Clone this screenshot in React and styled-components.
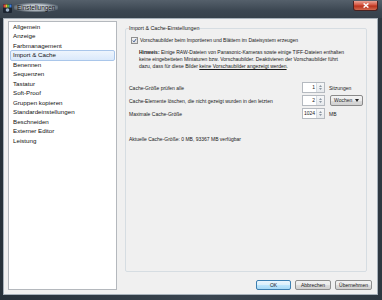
import styled, { createGlobalStyle } from 'styled-components'

const Global = createGlobalStyle`
    html, body { margin: 0; padding: 0; background: #2b353e; }
    body { font-family: 'Liberation Sans', Arial, sans-serif; }
`

const categories = [
    'Allgemein', 'Anzeige', 'Farbmanagement', 'Import & Cache', 'Benennen',
    'Sequenzen', 'Tastatur', 'Soft-Proof', 'Gruppen kopieren',
    'Standardeinstellungen', 'Beschneiden', 'Externer Editor', 'Leistung',
]

const Frame = styled.div`
    width: 382px;
    height: 300px;
    display: flex;
    flex-direction: column;
    background: linear-gradient(90deg, #27313a 0%, #3a4550 55%, #2e3841 100%);
    overflow: hidden;
`

const TitleBar = styled.div`
    height: 18px;
    display: flex;
    align-items: flex-start;
    padding: 0 4px 0 3px;
    background: linear-gradient(180deg, #55606b 0%, #3b4651 60%, #36414b 100%);
`

const AppIcon = styled.svg`
    margin-top: 4px;
    flex: none;
`

const Caption = styled.span`
    margin: 3px 0 0 2px;
    padding: 0 3px;
    font-size: 6.4px;
    line-height: 9px;
    color: #111;
    border-radius: 4px;
    background: radial-gradient(ellipse at center, rgba(214,222,229,0.85) 40%, rgba(214,222,229,0) 80%);
`

const CloseButton = styled.div`
    margin-left: auto;
    width: 23px;
    height: 9px;
    margin-top: 1px;
    border: 1px solid #4a2220;
    border-top: none;
    border-radius: 0 0 3px 3px;
    background: linear-gradient(180deg, #e8a497 0%, #d5533e 45%, #b8321d 55%, #d2694f 100%);
    display: flex;
    align-items: center;
    justify-content: center;
`

const Client = styled.div`
    flex: 1;
    margin: 0 4px 5px 3px;
    background: #f0f0f0;
    border: 1px solid #a7b1ba;
    display: flex;
    padding: 2px 5px 4px 4px;
    gap: 8px;
`

const Sidebar = styled.ul`
    width: 110px;
    margin: 0;
    padding: 0.5px 1px;
    list-style: none;
    background: #fff;
    border: 1px solid #b4b8bd;
`

const Item = styled.li`
    height: 8.5px;
    line-height: 8.5px;
    font-size: 6.2px;
    color: #111;
    padding-left: 2px;
    border: 1px solid ${p => (p.$active ? '#a9c6ea' : 'transparent')};
    border-radius: 2px;
    margin: -1px 0;
    background: ${p => (p.$active ? 'linear-gradient(180deg, #eef5fd 0%, #dae9fb 100%)' : 'transparent')};
    white-space: nowrap;
`

const Main = styled.div`
    flex: 1;
    display: flex;
    flex-direction: column;
`

const Group = styled.fieldset`
    flex: 1;
    margin: 4px 5px 0 0;
    padding: 0 3px;
    border: 1px solid #d6dde2;
    border-radius: 2px;
    font-size: 5px;
    color: #1a1a1a;
`

const Legend = styled.legend`
    padding: 0;
    font-size: 5.3px;
    line-height: 6px;
    color: #1a1a1a;
`

const CheckRow = styled.label`
    display: flex;
    align-items: center;
    gap: 2px;
    margin: 6px 0 0 2px;
    line-height: 7px;
    white-space: nowrap;
`

const CheckBox = styled.span`
    width: 5px;
    height: 5px;
    border: 1px solid #8f8f8f;
    background: linear-gradient(180deg, #f4f4f4, #dedede);
    display: flex;
    align-items: center;
    justify-content: center;
`

const Note = styled.div`
    margin: 5px 0 0 10px;
    line-height: 7px;
    white-space: nowrap;
`

const Line = styled.div``

const Strong = styled.b`
    font-weight: bold;
`

const Link = styled.span`
    text-decoration: underline;
`

const Settings = styled.div`
    display: grid;
    grid-template-columns: 169px 23px auto;
    column-gap: 4px;
    row-gap: 2px;
    align-items: center;
    margin-top: 12px;
`

const Label = styled.span`
    white-space: nowrap;
`

const SpinBox = styled.div`
    height: 11px;
    box-sizing: border-box;
    border: 1px solid #b5bac0;
    background: #fff;
    display: flex;
`

const SpinValue = styled.span`
    flex: 1;
    text-align: right;
    line-height: 9px;
    padding-right: 1px;
`

const SpinArrows = styled.span`
    width: 7px;
    display: flex;
    flex-direction: column;
    border-left: 1px solid #d6dbe0;
    background: linear-gradient(180deg, #f7f8f9, #e6e9ec);
    align-items: center;
    justify-content: space-evenly;
`

const Combo = styled.div`
    width: 33px;
    height: 11px;
    box-sizing: border-box;
    border: 1px solid #8a8a8a;
    border-radius: 2px;
    background: linear-gradient(180deg, #f3f3f3 0%, #ebebeb 50%, #dcdcdc 51%, #d0d0d0 100%);
    display: flex;
    align-items: center;
    justify-content: space-between;
    padding: 0 3px;
    margin-left: 1px;
    line-height: 9px;
`

const Current = styled.div`
    margin-top: 17px;
    white-space: nowrap;
`

const Buttons = styled.div`
    display: flex;
    justify-content: flex-end;
    gap: 4px;
    margin-top: 8px;
`

const Button = styled.button`
    width: ${p => p.$w}px;
    height: 10px;
    padding: 0;
    box-sizing: border-box;
    font-family: inherit;
    font-size: 5px;
    color: #1a1a1a;
    border: 1px solid ${p => (p.$default ? '#3c7fb1' : '#8e8f8f')};
    border-radius: 2px;
    background: ${p => (p.$default
        ? 'linear-gradient(180deg, #eaf6fd 0%, #d9f0fc 50%, #bee6fd 51%, #a7d9f5 100%)'
        : 'linear-gradient(180deg, #f2f2f2 0%, #ebebeb 50%, #dddddd 51%, #cfcfcf 100%)')};
`

const Arrow = ({ up }) => (
    <svg width="3" height="2" viewBox="0 0 4 2">
        <path d={up ? 'M0 2 L2 0 L4 2 Z' : 'M0 0 L4 0 L2 2 Z'} fill="#6b7a8a" />
    </svg>
)

const Spin = ({ value }) => (
    <SpinBox>
        <SpinValue>{value}</SpinValue>
        <SpinArrows>
            <Arrow up />
            <Arrow />
        </SpinArrows>
    </SpinBox>
)

const App = () => {
    return <>
        <Global />
        <Frame>
            <TitleBar>
                <AppIcon width="9" height="9" viewBox="0 0 9 9">
                    <rect x="0" y="0" width="9" height="9" rx="1" fill="#1b2430" />
                    <rect x="0.5" y="0.5" width="2" height="3" fill="#e94040" />
                    <rect x="2.5" y="0.5" width="2" height="3" fill="#f4c430" />
                    <rect x="4.5" y="0.5" width="2" height="3" fill="#4bb34b" />
                    <rect x="6.5" y="0.5" width="2" height="3" fill="#3f7fe0" />
                    <circle cx="4.5" cy="6" r="1.8" fill="#9fb3c8" />
                </AppIcon>
                <Caption>Einstellungen</Caption>
                <CloseButton>
                    <svg width="6" height="5" viewBox="0 0 6 5">
                        <path d="M0.6 0.4 L5.4 4.6 M5.4 0.4 L0.6 4.6" stroke="#fff" strokeWidth="1.4" />
                    </svg>
                </CloseButton>
            </TitleBar>
            <Client>
                <Sidebar>
                    {categories.map(c => <Item key={c} $active={c === 'Import & Cache'}>{c}</Item>)}
                </Sidebar>
                <Main>
                    <Group>
                        <Legend>Import &amp; Cache-Einstellungen</Legend>
                        <CheckRow>
                            <CheckBox>
                                <svg width="5" height="5" viewBox="0 0 5 5">
                                    <path d="M0.8 2.6 L2 3.9 L4.3 0.8" stroke="#2d4e8a" strokeWidth="0.9" fill="none" />
                                </svg>
                            </CheckBox>
                            Vorschaubilder beim Importieren und Blättern im Dateisystem erzeugen
                        </CheckRow>
                        <Note>
                            <Line><Strong>Hinweis:</Strong> Einige RAW-Dateien von Panasonic-Kameras sowie einige TIFF-Dateien enthalten</Line>
                            <Line>keine eingebetteten Miniaturen bzw. Vorschaubilder. Deaktivieren der Vorschaubilder führt</Line>
                            <Line>dazu, dass für diese Bilder <Link>keine Vorschaubilder angezeigt werden</Link>.</Line>
                        </Note>
                        <Settings>
                            <Label>Cache-Größe prüfen alle</Label>
                            <Spin value="1" />
                            <Label>Sitzungen</Label>
                            <Label>Cache-Elemente löschen, die nicht gezeigt wurden in den letzten</Label>
                            <Spin value="2" />
                            <Combo>
                                Wochen
                                <svg width="4" height="3" viewBox="0 0 4 3"><path d="M0 0 L4 0 L2 3 Z" fill="#222" /></svg>
                            </Combo>
                            <Label>Maximale Cache-Größe</Label>
                            <Spin value="1024" />
                            <Label>MB</Label>
                        </Settings>
                        <Current>Aktuelle Cache-Größe: 0 MB, 93367 MB verfügbar</Current>
                    </Group>
                    <Buttons>
                        <Button $default $w={35}>OK</Button>
                        <Button $w={36}>Abbrechen</Button>
                        <Button $w={37}>Übernehmen</Button>
                    </Buttons>
                </Main>
            </Client>
        </Frame>
    </>
}

export default App
